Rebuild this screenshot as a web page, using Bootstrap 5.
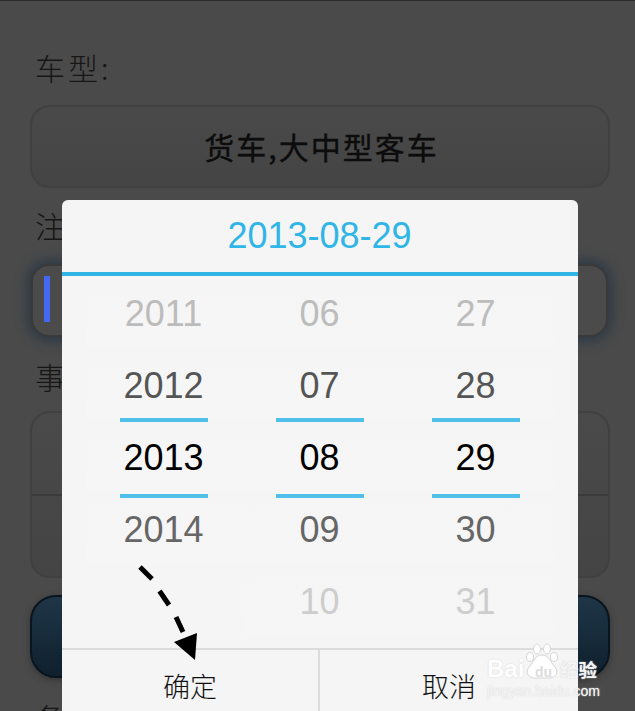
<!DOCTYPE html>
<html lang="zh">
<head>
<meta charset="utf-8">
<title>日期选择</title>
<link href="https://cdn.jsdelivr.net/npm/bootstrap@5.3.0/dist/css/bootstrap.min.css" rel="stylesheet">
<style>
html,body{height:711px;overflow:hidden}
body{background:#4a4a4a;font-family:"Liberation Sans","Noto Sans CJK SC",sans-serif;position:relative;border-top:1px solid #2a2a2a}
.form-pane{padding:48px 25px 0 30px;color:#1a1a1a}
.lbl{font-size:30px;line-height:36px;height:36px;padding-left:5px;letter-spacing:3px;font-family:"Noto Sans CJK SC",sans-serif;font-weight:300;color:#161616}
.fld{border:2px solid #404040;border-radius:20px;background:linear-gradient(#4a4a4a,#444)}
.fld-top{margin-top:20px}
.fld-car{height:83px;margin-bottom:19px;font:400 30px/79px "Noto Sans CJK SC",sans-serif;letter-spacing:2px;padding-left:3px;color:#0c0c0c;text-align:center;-webkit-text-stroke:.4px #0c0c0c}
.fld-date{height:73px;margin:21px 2px 21px 1px;border-radius:18px;border-color:#3a3a3a;background:#4b4b4b;box-shadow:0 0 12px 4px #2d3946;padding:10px 11px}
.caret-bar{width:6px;height:46px;background:#4468f0}
.fld-group{height:167px;margin:17px 0 17px}
.fld-group>div{flex:1}
.fld-group>div+div{border-top:2px solid #3b3b3b}
.dark-btn{height:83px;border:2px solid #08141e;border-radius:26px;background:linear-gradient(#1f3647,#0f202d);box-shadow:0 2px 6px #333}
.lbl-last{margin-top:21px}
.picker{position:absolute;left:62px;top:199px;width:516px;height:530px;background:#f5f5f5;border-radius:6px 6px 0 0;border:0}
.pick-head{height:76px;border-bottom:4px solid #2fb6e6;font-size:36px;line-height:71px;color:#2fb6e6;text-align:center;padding-right:1px}
.pick-body{height:372px;padding:2px 24px 0 24px}
.pick-col{width:156px}
.pick-cell{height:72px;font-size:36px;line-height:72px;text-align:center;padding-right:1px;background:linear-gradient(#f5f5f5,#f6f6f6)}
.pick-col .c1{color:#bcbcbc}
.pick-col .c2{color:#555}
.pick-col .c3{color:#000;position:relative}
.pick-col .c4{color:#666}
.pick-col .c5{color:#cdcdcd}
.pick-col .blank{background:none}
.pick-rule{position:absolute;left:34px;width:88px;height:4px;background:#50c0ea}
.pick-rule.up{top:-4px}
.pick-rule.dn{top:72px}
.pick-foot{border-top:2px solid #dcdcdc;height:80px}
.pick-foot>div{font:300 27px/72px "Noto Sans CJK SC",sans-serif;color:#111;text-align:center}
.pick-foot>.f-a{width:256px;border-right:2px solid #dcdcdc;box-sizing:content-box}
.pick-foot>.f-b{width:258px}
.arrow-layer{position:absolute;left:130px;top:555px;width:80px;height:115px}
.mark-wrap{position:absolute;left:487px;top:642px;width:148px;height:56px}
.mark-paw{position:absolute;left:37px;top:0;width:36px;height:36px}
.mark-bai{position:absolute;left:0;top:13px;font:700 24px/26px "Liberation Sans",sans-serif;color:#fff;text-shadow:0 0 1.500px #cfcfcf}
.mark-du{position:absolute;left:48px;top:21px;font:700 14px/16px "Liberation Sans",sans-serif;color:#dcdcdc}
.mark-jy{position:absolute;left:73px;top:14px;font:700 18.500px/24px "Noto Sans CJK SC",sans-serif;color:#f4f4f4;text-shadow:0 0 1.500px #cfcfcf}
.mark-url{position:absolute;left:0;top:39px;font:400 14px/18px "Liberation Sans",sans-serif;color:#f4f4f4;text-shadow:0 0 1.500px #d2d2d2;white-space:nowrap}
</style>
</head>
<body>
<div class="form-pane">
  <div class="lbl">车型:</div>
  <div class="fld fld-car fld-top">货车,大中型客车</div>
  <div class="lbl">注</div>
  <div class="fld fld-date"><div class="caret-bar"></div></div>
  <div class="lbl">事</div>
  <div class="fld fld-group d-flex flex-column"><div></div><div></div></div>
  <div class="dark-btn"></div>
  <div class="lbl lbl-last">备</div>
</div>

<div class="card picker">
  <div class="pick-head">2013-08-29</div>
  <div class="pick-body d-flex">
    <div class="pick-col">
      <div class="pick-cell c1">2011</div><div class="pick-cell c2">2012</div>
      <div class="pick-cell c3"><i class="pick-rule up"></i>2013<i class="pick-rule dn"></i></div>
      <div class="pick-cell c4">2014</div><div class="pick-cell blank"></div>
    </div>
    <div class="pick-col">
      <div class="pick-cell c1">06</div><div class="pick-cell c2">07</div>
      <div class="pick-cell c3"><i class="pick-rule up"></i>08<i class="pick-rule dn"></i></div>
      <div class="pick-cell c4">09</div><div class="pick-cell c5">10</div>
    </div>
    <div class="pick-col">
      <div class="pick-cell c1">27</div><div class="pick-cell c2">28</div>
      <div class="pick-cell c3"><i class="pick-rule up"></i>29<i class="pick-rule dn"></i></div>
      <div class="pick-cell c4">30</div><div class="pick-cell c5">31</div>
    </div>
  </div>
  <div class="pick-foot d-flex">
    <div class="f-a">确定</div>
    <div class="f-b">取消</div>
  </div>
</div>

<svg class="arrow-layer" viewBox="130 555 80 115" aria-hidden="true">
  <g stroke="#000" stroke-width="5" fill="none">
    <path d="M140 566L152 578"/>
    <path d="M159.500 590L169 604"/>
    <path d="M176 616L183 631"/>
  </g>
  <path d="M174 641L197 632L195 659Z" fill="#000"/>
</svg>

<div class="mark-wrap">
  <svg class="mark-paw" viewBox="0 0 36 36" aria-hidden="true">
    <g fill="#fff" stroke="#d6d6d6" stroke-width="1">
      <ellipse cx="6" cy="14" rx="3.500" ry="4.500"/>
      <ellipse cx="13" cy="6" rx="3.500" ry="5"/>
      <ellipse cx="23" cy="6" rx="3.500" ry="5"/>
      <ellipse cx="30" cy="14" rx="3.500" ry="4.500"/>
      <path d="M18 12C11 12 10 19 5 24C1 29 4 35 11 35C15 35 21 35 25 35C32 35 35 29 31 24C26 19 25 12 18 12Z"/>
    </g>
  </svg>
  <span class="mark-bai">Bai</span>
  <span class="mark-du">du</span>
  <span class="mark-jy">经验</span>
  <span class="mark-url">jingyan.baidu.com</span>
</div>
</body>
</html>
